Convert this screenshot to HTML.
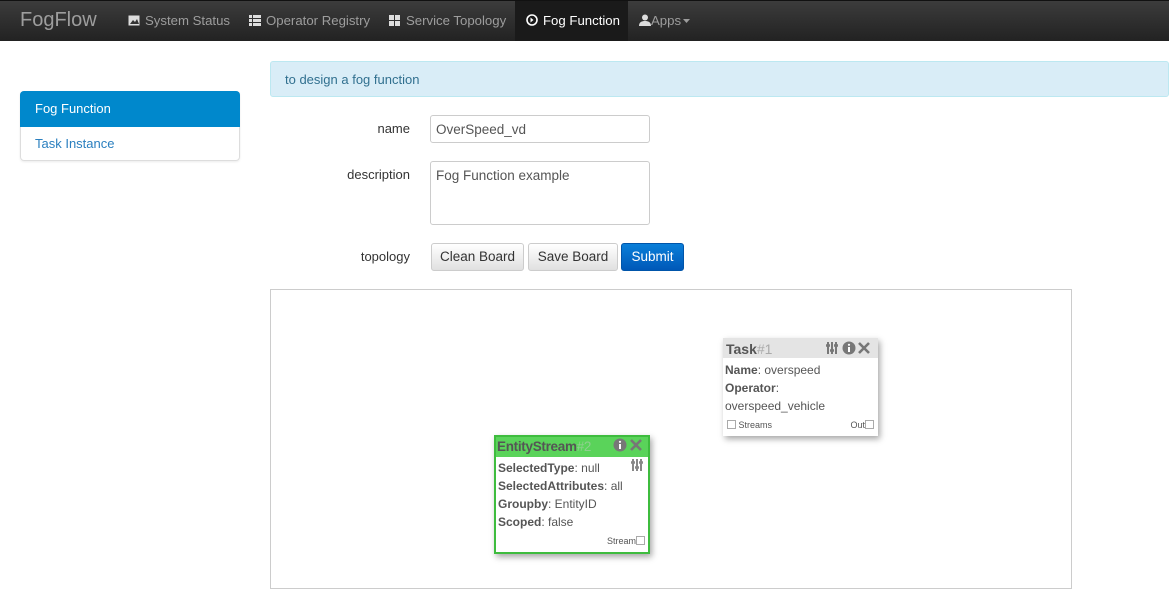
<!DOCTYPE html>
<html><head><style>
*{box-sizing:border-box;margin:0;padding:0}
body{width:1169px;height:564px;overflow:hidden;background:#fff;font-family:"Liberation Sans",Arial,sans-serif;font-size:13px;color:#333;position:relative}
.a{position:absolute}
.nav{left:0;top:0;width:1169px;height:41px;background:linear-gradient(#3c3c3c,#222);border-top:1px solid #111}
.nav span{position:absolute;top:12px;color:#9d9d9d;font-size:13.2px;white-space:nowrap}
.ic{display:inline-block;vertical-align:-1px;margin-right:5px}
.btn{position:absolute;top:243px;height:28px;border:1px solid #ccc;border-radius:3px;background:linear-gradient(#fff,#e0e0e0);font-size:13.5px;text-align:center;line-height:26px;color:#333}
.inp{position:absolute;border:1px solid #ccc;border-radius:3px;padding:6px 5px;font-size:13.5px;color:#555;background:#fff}
.lbl{position:absolute;font-size:13px;color:#333;text-align:right;width:120px}
.node{position:absolute;background:#fff;box-shadow:2px 3px 6px rgba(0,0,0,.35);font-size:12px;color:#555}
.node b{color:#555}
.cb{display:inline-block;width:9px;height:9px;border:1px solid #aaa;vertical-align:-1px}
</style></head><body>
<div class="a nav">
<span style="left:20px;top:8px;font-size:20px;color:#9d9d9d">FogFlow</span>
<span style="left:128px"><svg class="ic" width="12" height="11"><rect x="0.5" y="0.5" width="11" height="10" fill="#ddd"/><path d="M2 9l3-4 2 2 2-3 2 5z" fill="#333"/></svg>System Status</span>
<span style="left:249px"><svg class="ic" width="12" height="11" fill="#ddd"><rect x="0" y="0" width="3" height="3"/><rect x="4" y="0" width="8" height="3"/><rect x="0" y="4" width="3" height="3"/><rect x="4" y="4" width="8" height="3"/><rect x="0" y="8" width="3" height="3"/><rect x="4" y="8" width="8" height="3"/></svg>Operator Registry</span>
<span style="left:389px"><svg class="ic" width="12" height="11" fill="#ddd"><rect x="0" y="0" width="5" height="5"/><rect x="6" y="0" width="5" height="5"/><rect x="0" y="6" width="5" height="5"/><rect x="6" y="6" width="5" height="5"/></svg>Service Topology</span>
<div class="a" style="left:515px;top:0;width:113px;height:40px;background:#1a1a1a"></div>
<span style="left:526px;color:#fff"><svg class="ic" width="12" height="12"><circle cx="6" cy="6" r="5" fill="none" stroke="#fff" stroke-width="1.6"/><path d="M4.5 3.5l3 2.5-3 2.5z" fill="#fff"/></svg>Fog Function</span>
<span style="left:639px"><svg width="12" height="12" style="vertical-align:-1px"><circle cx="6" cy="3.5" r="3" fill="#ddd"/><path d="M0 12c0-4 3-5 6-5s6 1 6 5z" fill="#ddd"/></svg>Apps<svg width="8" height="6" style="margin-left:2px;vertical-align:1px"><path d="M0 1h7l-3.5 4z" fill="#9d9d9d"/></svg></span>
</div>
<div class="a" style="left:20px;top:91px;width:220px;height:70px;border:1px solid #ddd;border-radius:4px;box-shadow:0 1px 2px rgba(0,0,0,.08)"></div>
<div class="a" style="left:20px;top:91px;width:220px;height:36px;background:#0088cc;border-radius:4px 4px 0 0;color:#fff;padding:10px 15px">Fog Function</div>
<div class="a" style="left:35px;top:136px;color:#2a7fbf">Task Instance</div>
<div class="a" style="left:270px;top:61px;width:899px;height:36px;background:#d9edf7;border:1px solid #bce8f1;border-radius:3px;color:#31708f;padding:10px 14px">to design a fog function</div>
<div class="lbl" style="left:290px;top:121px">name</div>
<div class="inp" style="left:430px;top:115px;width:220px;height:28px">OverSpeed_vd</div>
<div class="lbl" style="left:290px;top:167px">description</div>
<div class="inp" style="left:430px;top:161px;width:220px;height:64px">Fog Function example</div>
<div class="lbl" style="left:290px;top:249px">topology</div>
<div class="btn" style="left:431px;width:93px">Clean Board</div>
<div class="btn" style="left:528px;width:90px">Save Board</div>
<div class="btn" style="left:621px;width:63px;background:linear-gradient(#0a7fd9,#0058b8);border-color:#0055aa;color:#fff">Submit</div>
<div class="a" style="left:270px;top:289px;width:802px;height:300px;border:1px solid #ccc"></div>

<div class="node" style="left:723px;top:338px;width:155px;height:98px">
<div style="background:#e4e4e4;height:20px;padding:3px 3px;font-size:14px"><b style="color:#555">Task</b><span style="color:#aaa">#1</span>
<svg style="position:absolute;right:4px;top:3px" width="48" height="14"><g fill="#777"><rect x="1" y="1" width="2" height="12"/><rect x="5" y="1" width="2" height="12"/><rect x="9" y="1" width="2" height="12"/><rect x="0" y="3" width="4" height="3" rx="1"/><rect x="4" y="8" width="4" height="3" rx="1"/><rect x="8" y="3" width="4" height="3" rx="1"/><circle cx="23" cy="7" r="6.5"/></g><rect x="22" y="6" width="2" height="5" fill="#fff"/><circle cx="23" cy="3.8" r="1.1" fill="#fff"/><path d="M33 2l10 10M43 2l-10 10" stroke="#777" stroke-width="2.6"/></svg></div>
<div style="padding:3px 2px 0;line-height:18px"><b>Name</b>: overspeed<br><b>Operator</b>:<br>overspeed_vehicle</div>
<div style="font-size:9px;padding:5px 4px;position:relative"><span class="cb"></span> Streams<span style="position:absolute;right:4px">Out<span class="cb"></span></span></div>
</div>

<div class="node" style="left:494px;top:435px;width:156px;height:119px;border:2px solid #3ebc3e">
<div style="background:#5ad35a;height:20px;padding:2px 1px;font-size:13.5px;white-space:nowrap;letter-spacing:-0.3px"><b style="color:#555">EntityStream</b><span style="color:#8fcf8f">#2</span>
<svg style="position:absolute;right:3px;top:1px" width="32" height="14"><circle cx="7" cy="7" r="6.5" fill="#777"/><rect x="6" y="6" width="2" height="5" fill="#fff"/><circle cx="7" cy="3.8" r="1.1" fill="#fff"/><path d="M18 2l10 10M28 2l-10 10" stroke="#777" stroke-width="2.6"/></svg></div>
<svg style="position:absolute;right:4px;top:21px" width="13" height="13"><g fill="#888"><rect x="1" y="1" width="2" height="12"/><rect x="5" y="1" width="2" height="12"/><rect x="9" y="1" width="2" height="12"/><rect x="0" y="3" width="4" height="3" rx="1"/><rect x="4" y="8" width="4" height="3" rx="1"/><rect x="8" y="3" width="4" height="3" rx="1"/></g></svg>
<div style="padding:2px 2px 0;line-height:18px"><b>SelectedType</b>: null<br><b>SelectedAttributes</b>: all<br><b>Groupby</b>: EntityID<br><b>Scoped</b>: false</div>
<div style="font-size:9px;text-align:right;padding:5px 3px">Stream<span class="cb"></span></div>
</div>
</body></html>
